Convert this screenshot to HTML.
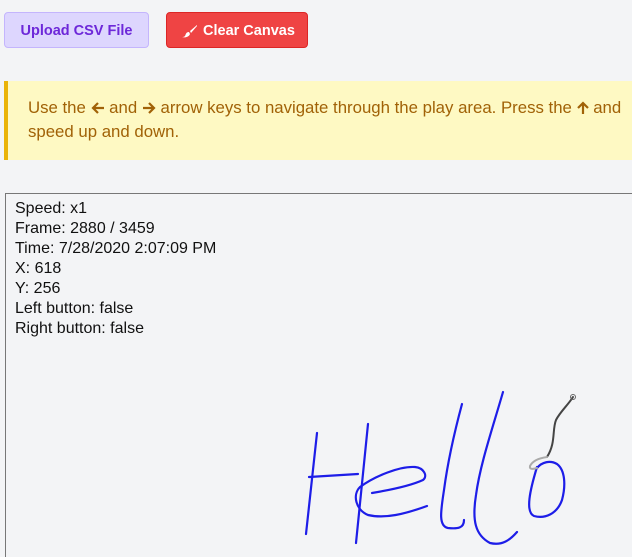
<!DOCTYPE html>
<html style="overflow:hidden"><head><style>
html,body{height:557px}
body{margin:0;background:#f3f4f6;font-family:"Liberation Sans",sans-serif;width:632px;overflow:hidden;position:relative}
.btn{position:absolute;top:12px;height:36px;border-radius:4px;font-weight:bold;font-size:14.5px;line-height:36px;box-sizing:border-box}
.up{left:4px;width:145px;background:#ddd6fe;color:#6d28d9;border:1px solid #c4b5fd;text-align:center}
.cl{left:166px;width:142px;background:#ef4444;color:#fff;border:1px solid #dc2626;padding-left:36px}
.al{position:absolute;left:4px;top:81px;width:628px;height:79px;overflow:hidden;background:#fef9c3;border-left:4px solid #eab308;box-sizing:border-box;color:#a16207;font-size:16.8px;line-height:24px;padding:15px 0 0 20px;white-space:nowrap}
.al svg{vertical-align:-2px}
.cv{position:absolute;left:5px;top:193px;width:640px;height:380px;border:1px solid #777;background:#f3f4f6}
.info{position:absolute;left:15px;top:199px;font-size:16px;line-height:20px;color:#111}
</style></head><body>
<div class="btn up">Upload CSV File</div>
<div class="btn cl"><svg width="16" height="14" viewBox="0 0 16 14" style="position:absolute;left:15px;top:11px"><path d="M15 1 L8 7 L9 9 L15 2Z M7 8 C4 8 4 10 3 12 C2 13 1 13 0 13 C3 14 7 13 8 10Z" fill="#fff"/></svg>Clear Canvas</div>
<div class="al">Use the <svg width="14" height="14" viewBox="0 0 14 14"><path d="M13 7H2M7 2L2 7L7 12" stroke="#a16207" stroke-width="2.2" fill="none"/></svg> and <svg width="14" height="14" viewBox="0 0 14 14"><path d="M1 7H12M7 2L12 7L7 12" stroke="#a16207" stroke-width="2.2" fill="none"/></svg> arrow keys to navigate through the play area. Press the <svg width="12" height="14" viewBox="0 0 12 14"><path d="M6 13V2M1 7L6 2L11 7" stroke="#a16207" stroke-width="2.2" fill="none"/></svg> and<br>speed up and down.</div>
<div class="cv"></div>
<div class="info">Speed: x1<br>Frame: 2880 / 3459<br>Time: 7/28/2020 2:07:09 PM<br>X: 618<br>Y: 256<br>Left button: false<br>Right button: false</div>
<svg width="632" height="557" style="position:absolute;left:0;top:0" fill="none" stroke-linecap="round" stroke-linejoin="round">
<g stroke="#1d1de8" stroke-width="2.2">
<path d="M317 433 L306 534 M309 477 L358 474 M368 424 L356 543"/>
<path d="M372 493 C390 490 410 486 423 480 C428 476 424 468 415 467 C400 466 375 476 360 487 C352 495 356 510 368 515 C385 519 405 514 427 506"/>
<path d="M462 404 C455 430 448 460 444 490 C441 510 438 526 448 528 C458 529 464 528 464 520"/>
<path d="M503 392 C492 430 480 465 476 495 C472 520 475 535 490 543 C502 546 510 540 517 532"/>
<path d="M537 467 C530 490 525 512 534 516 C545 519 557 514 562 500 C566 485 565 470 557 464 C550 460 542 462 537 468"/>
</g>
<path d="M573 397 C568 405 560 412 556 420 C552 430 556 443 547 457" stroke="#444" stroke-width="2"/>
<path d="M547 457 C540 458 533 460 530 466 C529 470 534 469 537 468" stroke="#aaa" stroke-width="2"/>
<circle cx="573" cy="397" r="2.5" stroke="#666" stroke-width="1"/>
</svg>
</body></html>
